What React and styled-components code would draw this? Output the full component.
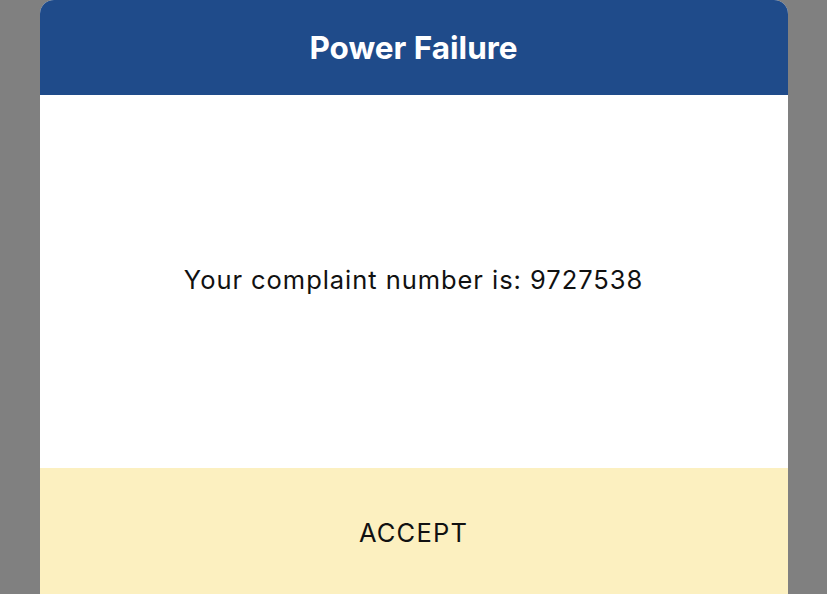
import React from "react";
import styled, { createGlobalStyle } from "styled-components";

const Global = createGlobalStyle`
  html, body { margin: 0; padding: 0; background: #808080; overflow: hidden; }
  body { font-family: Inter, "Liberation Sans", sans-serif; }
`;

const Backdrop = styled.div`
  width: 827px;
  height: 594px;
  background: #808080;
  display: flex;
  justify-content: center;
  align-items: flex-start;
  overflow: hidden;
`;

const Dialog = styled.div`
  width: 748px;
  display: flex;
  flex-direction: column;
  border-radius: 14px 14px 0 0;
  overflow: hidden;
  background: #ffffff;
`;

const Header = styled.div`
  flex: 0 0 95px;
  background: #1f4b8a;
  display: flex;
  align-items: center;
  justify-content: center;
  color: #ffffff;
  font-size: 31.5px;
  font-weight: 700;
  padding-bottom: 1px;
  box-sizing: border-box;
`;

const Body = styled.div`
  flex: 0 0 373px;
  display: flex;
  align-items: center;
  justify-content: center;
  color: #111111;
  font-size: 25.5px;
  letter-spacing: 0.95px;
  padding-bottom: 4px;
  box-sizing: border-box;
`;

const Footer = styled.button`
  flex: 0 0 130px;
  border: none;
  background: #fcf0c0;
  font-family: inherit;
  font-size: 25.5px;
  letter-spacing: 1.2px;
  color: #111111;
  display: flex;
  align-items: center;
  justify-content: center;
  padding: 0 0 2px;
`;

export default function App() {
  return (
    <>
      <Global />
      <Backdrop>
        <Dialog>
          <Header>Power Failure</Header>
          <Body>Your complaint number is: 9727538</Body>
          <Footer>ACCEPT</Footer>
        </Dialog>
      </Backdrop>
    </>
  );
}
